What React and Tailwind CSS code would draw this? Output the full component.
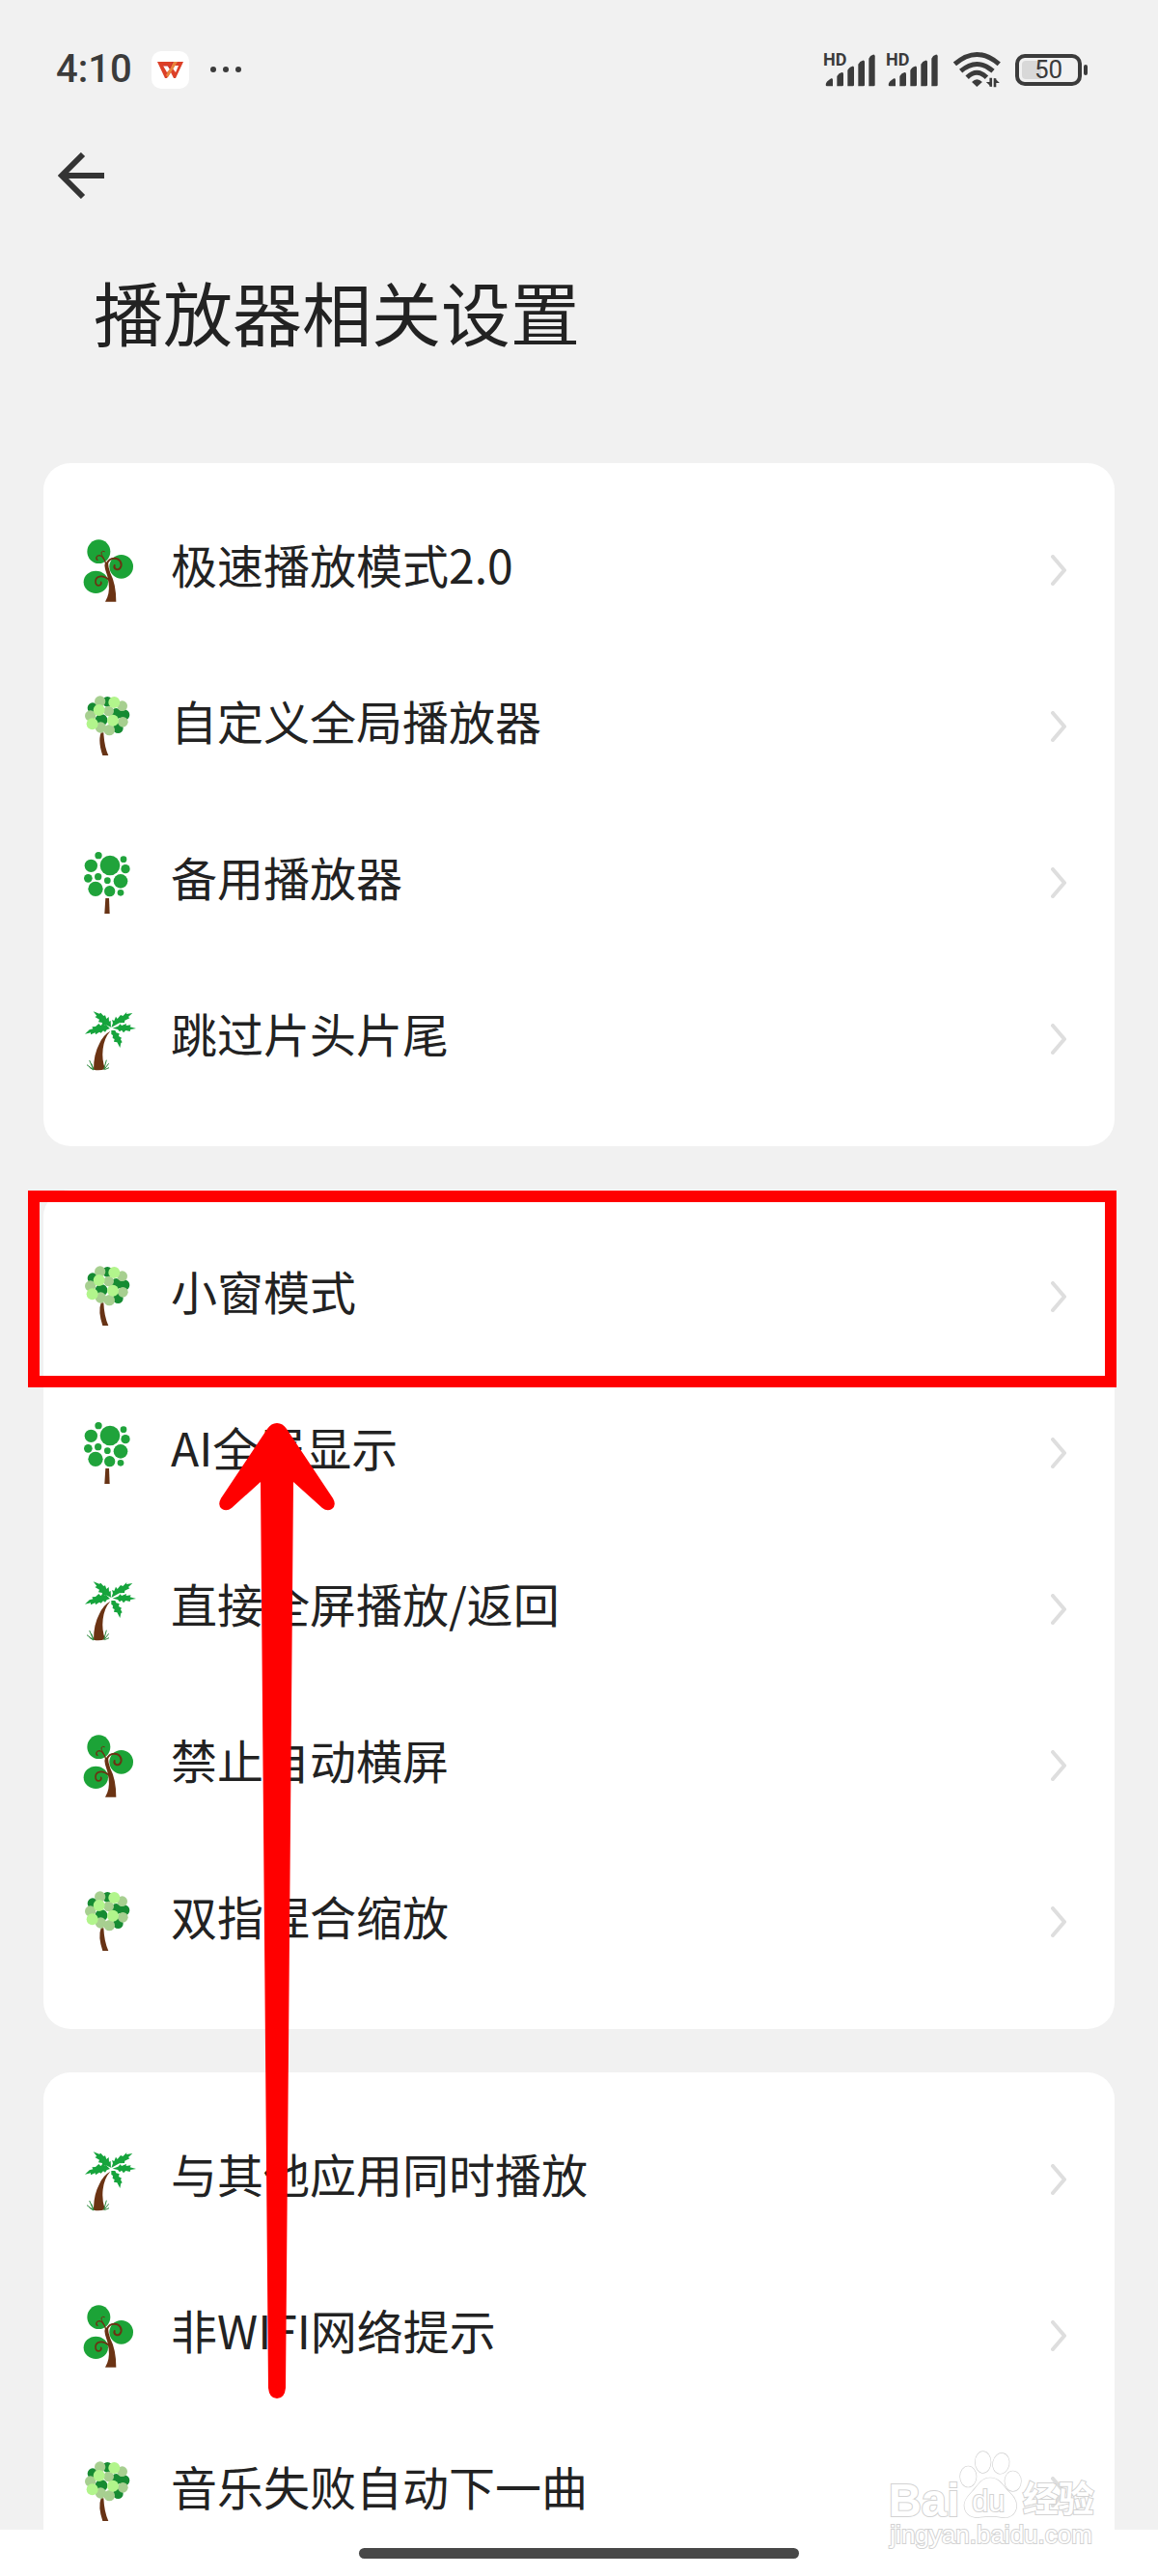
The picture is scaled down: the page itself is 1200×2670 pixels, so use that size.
const CurlyTree = () => (
  <svg viewBox="0 3 270 300" className="w-[90px] h-[100px] shrink-0" aria-hidden="true">
    <g fill="#1ca337">
      <ellipse cx="97" cy="95" rx="36" ry="37" />
      <ellipse cx="167" cy="142" rx="37" ry="37" />
      <ellipse cx="88" cy="190" rx="38" ry="35" />
    </g>
    <path d="M117 251 Q132 226 128 194 Q125 170 117 150 Q113 138 117 130 L126 128 Q126 142 133 162 Q151 196 151 251 Z" fill="#6b3313" />
    <g fill="none" stroke="#6b3313" strokeLinecap="round">
      <path d="M122 134 Q128 116 145 116 C164 116 172 135 163 147 C156 155 142 149 146 138" strokeWidth="6" />
      <path d="M119 132 Q112 110 100 107 C90 107 86 117 93 121" strokeWidth="4" />
      <path d="M112 116 Q103 101 106 96 Q109 92 115 95" strokeWidth="3" />
      <path d="M128 182 Q112 169 99 173 C83 177 84 198 96 201 C104 200 106 194 104 190" strokeWidth="5" />
    </g>
  </svg>
);

const LeafyTree = () => (
  <svg viewBox="0 9 270 300" className="w-[90px] h-[100px] shrink-0" aria-hidden="true">
    <path d="M104 178 Q94 205 109 249 L127 249 Q114 221 112 178 Z" fill="#673315" />
    <g fill="#168b32">
      <circle cx="78" cy="101" r="16" />
      <circle cx="124" cy="82" r="16" />
      <circle cx="151" cy="119" r="17" />
      <circle cx="176" cy="123" r="17" />
      <circle cx="105" cy="139" r="19" />
      <circle cx="157" cy="164" r="16" />
    </g>
    <g fill="#a7cf90">
      <circle cx="101" cy="81" r="17" />
      <circle cx="170" cy="95" r="16" />
      <circle cx="71" cy="126" r="17" />
      <circle cx="128" cy="111" r="16" />
      <circle cx="172" cy="145" r="16" />
      <circle cx="103" cy="162" r="17" />
      <circle cx="130" cy="170" r="17" />
    </g>
    <g fill="#b2f58c">
      <circle cx="145" cy="84" r="18" />
      <circle cx="98" cy="108" r="18" />
      <circle cx="77" cy="151" r="18" />
      <circle cx="141" cy="140" r="18" />
    </g>
  </svg>
);

const DottedTree = () => (
  <svg viewBox="0 15 270 300" className="w-[90px] h-[100px] shrink-0" aria-hidden="true">
    <path d="M118 213 h11 l2 48 h-16 Z" fill="#673315" />
    <g fill="#20a33b">
      <circle cx="96" cy="80" r="11" />
      <circle cx="73" cy="112" r="20" />
      <circle cx="132" cy="111" r="31" />
      <circle cx="174" cy="92" r="10" />
      <circle cx="180" cy="122" r="14" />
      <circle cx="64" cy="151" r="13" />
      <circle cx="95" cy="146" r="11" />
      <circle cx="124" cy="158" r="10" />
      <circle cx="165" cy="160" r="22" />
      <circle cx="87" cy="184" r="23" />
      <circle cx="131" cy="191" r="17" />
      <circle cx="165" cy="196" r="10" />
    </g>
  </svg>
);

const PalmTree = () => (
  <svg viewBox="0 -9 270 300" className="w-[90px] h-[100px] shrink-0" aria-hidden="true">
    <path d="M133 116 Q114 137 110 172 Q106 206 117 234 Q99 240 81 236 Q81 187 99 155 Q111 128 133 116 Z" fill="#6b3313" />
    <g fill="#16a43c">
      <path d="M135 104 L117 96 L107 98 L108 90 L96 88 L99 80 L85 72 L91 69 L80 55 L99 62 L103 59 L112 69 L117 67 L121 78 L128 72 L129 86 L134 84 Z" />
      <path d="M136 105 L141 91 L138 81 L145 84 L150 71 L155 78 L165 66 L172 69 L184 57 L183 63 L202 60 L189 72 L193 76 L178 83 L177 90 L161 91 Z" />
      <path d="M132 108 L119 96 L114 97 L111 92 L103 99 L97 93 L87 102 L76 103 L79 109 L68 112 L54 125 L72 121 L72 127 L86 121 L87 127 L99 119 L104 122 L111 115 L117 119 L122 112 Z" />
      <path d="M140 107 L157 101 L164 94 L168 99 L183 93 L182 99 L197 97 L194 103 L213 108 L196 111 L194 117 L181 114 L174 121 L168 113 L162 118 L156 111 Z" />
      <path d="M136 114 L136 126 L141 129 L140 138 L146 141 L144 149 L154 151 L163 168 L166 153 L170 151 L165 142 L168 137 L159 132 L161 124 L151 121 L148 114 Z" />
    </g>
    <path d="M81 236 L68 207 M81 236 L74 217 M80 236 L60 221 M81 237 L68 229 M113 235 L121 206 M114 235 L128 217 M115 236 L129 230" stroke="#2c8a3c" strokeWidth="3" fill="none" />
  </svg>
);

const groups = [
  [
    { label: '极速播放模式2.0', Icon: CurlyTree },
    { label: '自定义全局播放器', Icon: LeafyTree },
    { label: '备用播放器', Icon: DottedTree },
    { label: '跳过片头片尾', Icon: PalmTree },
  ],
  [
    { label: '小窗模式', Icon: LeafyTree },
    { label: 'AI全屏显示', Icon: DottedTree },
    { label: '直接全屏播放/返回', Icon: PalmTree },
    { label: '禁止自动横屏', Icon: CurlyTree },
    { label: '双指捏合缩放', Icon: LeafyTree },
  ],
  [
    { label: '与其他应用同时播放', Icon: PalmTree },
    { label: '非WIFI网络提示', Icon: CurlyTree },
    { label: '音乐失败自动下一曲', Icon: LeafyTree },
  ],
];

const Signal = () => (
  <div className="relative w-[54px] h-[35px]">
    <svg viewBox="97 72 162 105" className="w-full h-full" fill="#3b3b3b" aria-hidden="true">
      <path d="M105 171 Q105 161 122 151 Q127 149 127 155 V175 H109 Q105 175 105 171 Z" />
      <path d="M140 175 V144 Q146 134 155 132 Q160 131 160 137 V171 Q160 175 156 175 Z" />
      <path d="M173 175 V125 Q179 114 188 113 Q193 112 193 118 V171 Q193 175 189 175 Z" />
      <path d="M206 175 V107 Q211 97 220 95 Q226 94 226 100 V171 Q226 175 222 175 Z" />
      <path d="M239 175 V89 Q243 79 252 77 Q258 76 258 82 V171 Q258 175 254 175 Z" />
    </svg>
    <span className="absolute left-0 top-0 text-[18px] leading-[14px] font-bold">HD</span>
  </div>
);

const Wifi = () => (
  <svg viewBox="495 68 150 116" className="w-[50px] h-[38px]" fill="none" stroke="#3b3b3b" strokeWidth="15" aria-hidden="true">
    <path d="M501 109 Q571 48 641 109" />
    <path d="M520 131 Q571 87 622 131" />
    <path d="M540 151 Q571 121 602 151" />
    <path d="M555 166 Q571 149 588 166 L571 181 Z" fill="#3b3b3b" stroke="none" />
    <path d="M615 153 V180 M628 182 V154" strokeWidth="8" />
    <path d="M600 166 L617 182 V166 Z M626 153 L643 169 H626 Z" fill="#3b3b3b" stroke="none" />
  </svg>
);

const Battery = () => (
  <div className="flex items-center gap-[2px]">
    <div className="relative w-[69px] h-[33px] rounded-[10px] border-4 border-[#3b3b3b] flex items-center justify-center">
      <span className="absolute left-[3px] inset-y-[3px] w-1/3 rounded-l-[4px] bg-[#d8d8d8]" />
      <span className="relative text-[26px] leading-none">50</span>
    </div>
    <span className="w-1 h-[11px] rounded-full bg-[#3b3b3b]" />
  </div>
);

const StatusBar = () => (
  <div className="flex items-center justify-between pl-[58px] pr-[73px] py-[52px] font-['Roboto',sans-serif] text-[#3b3b3b]">
    <div className="flex items-center">
      <span className="text-[40px] leading-[40px] font-medium">4:10</span>
      <svg viewBox="0 0 39 39" className="ml-5 w-[39px] h-[39px]" aria-hidden="true">
        <rect width="39" height="39" rx="10" fill="#fff" />
        <path d="M6 11 H33 L25 28 H23 L20 22 L16 28 H14 Z" fill="#dc4028" />
        <path d="M12 15 H17 L19 19 L16 22 Z" fill="#fff" />
        <path d="M24 15 H28 L25 22 L22 18 Z" fill="#fff" />
        <path d="M23 11 H27 L17 27 L15 25 Z" fill="#e8843c" />
        <path d="M22 11 L19 18 L17 15 H12" fill="none" stroke="#cb3030" strokeWidth="1" />
      </svg>
      <span className="ml-[22px] flex gap-[7px]">
        <i className="size-[6px] rounded-full bg-[#3b3b3b]" />
        <i className="size-[6px] rounded-full bg-[#3b3b3b]" />
        <i className="size-[6px] rounded-full bg-[#3b3b3b]" />
      </span>
    </div>
    <div className="flex items-center gap-[15px]">
      <div className="flex gap-[11px]">
        <Signal />
        <Signal />
      </div>
      <Wifi />
      <Battery />
    </div>
  </div>
);

const SettingRow = ({ label, Icon }) => (
  <li>
    <button type="button" className="flex items-center w-full h-[162px] pl-[25px] pr-[50px] text-left">
      <Icon />
      <span className="ml-[17px] flex-1 text-[48px] leading-[72px] pb-[14px]">{label}</span>
      <svg viewBox="0 0 16 32" className="w-4 h-8" fill="none" stroke="#dedede" strokeWidth="4" strokeLinecap="round" strokeLinejoin="round" aria-hidden="true">
        <path d="M2 2 L14 16 L2 30" />
      </svg>
    </button>
  </li>
);

// Highlight frame on the first row, and the arrow pointing up at it
const Highlight = () => (
  <div className="pointer-events-none absolute inset-0 z-10">
    <div className="absolute -left-4 -right-[2px] top-px h-[204px] border-[12px] border-[#ff0000]" />
    <svg viewBox="0 0 120 1011" className="absolute left-[182px] top-[242px] w-[120px] h-[1011px]" fill="#ff0000" aria-hidden="true">
      <path d="M60 0 Q66 0 70 6 L118 78 Q122 85 117 89 Q112 92 107 88 L77 61 L69 1000 Q68 1011 60 1011 Q52 1011 51 1000 L43 61 L13 88 Q8 92 3 89 Q-2 85 2 78 L50 6 Q54 0 60 0 Z" />
    </svg>
  </div>
);

const Watermark = () => (
  <svg viewBox="178 180 654 321" className="pointer-events-none absolute right-[62px] bottom-6 w-[218px] h-[107px] overflow-visible" fill="#fff" stroke="#d2d2d2" strokeWidth="6" paintOrder="stroke">
    <text x="180" y="386" fontSize="142" fontWeight="700" fontFamily="Liberation Sans, sans-serif">Bai</text>
    <g strokeWidth="4">
      <ellipse cx="428" cy="264" rx="25" ry="32" />
      <ellipse cx="474" cy="219" rx="24" ry="33" />
      <ellipse cx="530" cy="223" rx="25" ry="32" transform="rotate(12 530 223)" />
      <ellipse cx="567" cy="278" rx="25" ry="31" />
      <path d="M497 268 C520 268 533 286 545 302 C560 318 578 330 578 356 C576 382 556 392 536 391 Q497 383 458 391 C434 391 416 378 416 352 C418 328 438 316 450 300 C462 284 474 268 497 268 Z" />
    </g>
    <text x="440" y="371" fontSize="92" fontFamily="Liberation Sans, sans-serif">du</text>
    <text x="597" y="376" fontSize="111" fontWeight="700" fontFamily="Noto Sans CJK SC, sans-serif">经验</text>
    <text x="185" y="471" fontSize="78" fontFamily="Liberation Sans, sans-serif">jingyan.baidu.com</text>
  </svg>
);

export default function App() {
  return (
    <div className="relative h-screen flex flex-col overflow-hidden bg-white font-['Noto_Sans_CJK_SC',sans-serif] text-[#222222]">
      <div className="flex-1 min-h-0 overflow-hidden bg-[#f1f1f1]">
        <header>
          <StatusBar />
          <button type="button" aria-label="返回" className="block ml-[60px] mt-[14px]">
            <svg viewBox="0 0 48 48" className="size-12" fill="none" stroke="#343434" strokeWidth="6" aria-hidden="true">
              <path d="M48 24 H4 M26 2 L4 24 L26 46" />
            </svg>
          </button>
          <h1 className="mt-[62px] ml-[97px] text-[72px] leading-[108px] font-normal">播放器相关设置</h1>
        </header>
        <main className="mt-[104px] px-[45px] space-y-[45px]">
          {groups.map((items, i) => (
            <section key={items[0].label} className="relative bg-white rounded-[28px] py-[30px]">
              <ul>
                {items.map((item) => (
                  <SettingRow key={item.label} {...item} />
                ))}
              </ul>
              {i === 1 && <Highlight />}
            </section>
          ))}
        </main>
      </div>
      <footer className="flex justify-center h-12 shrink-0 bg-white">
        <span className="mt-[19px] w-[38%] h-[11px] rounded-full bg-[#484848]" />
      </footer>
      <Watermark />
    </div>
  );
}
